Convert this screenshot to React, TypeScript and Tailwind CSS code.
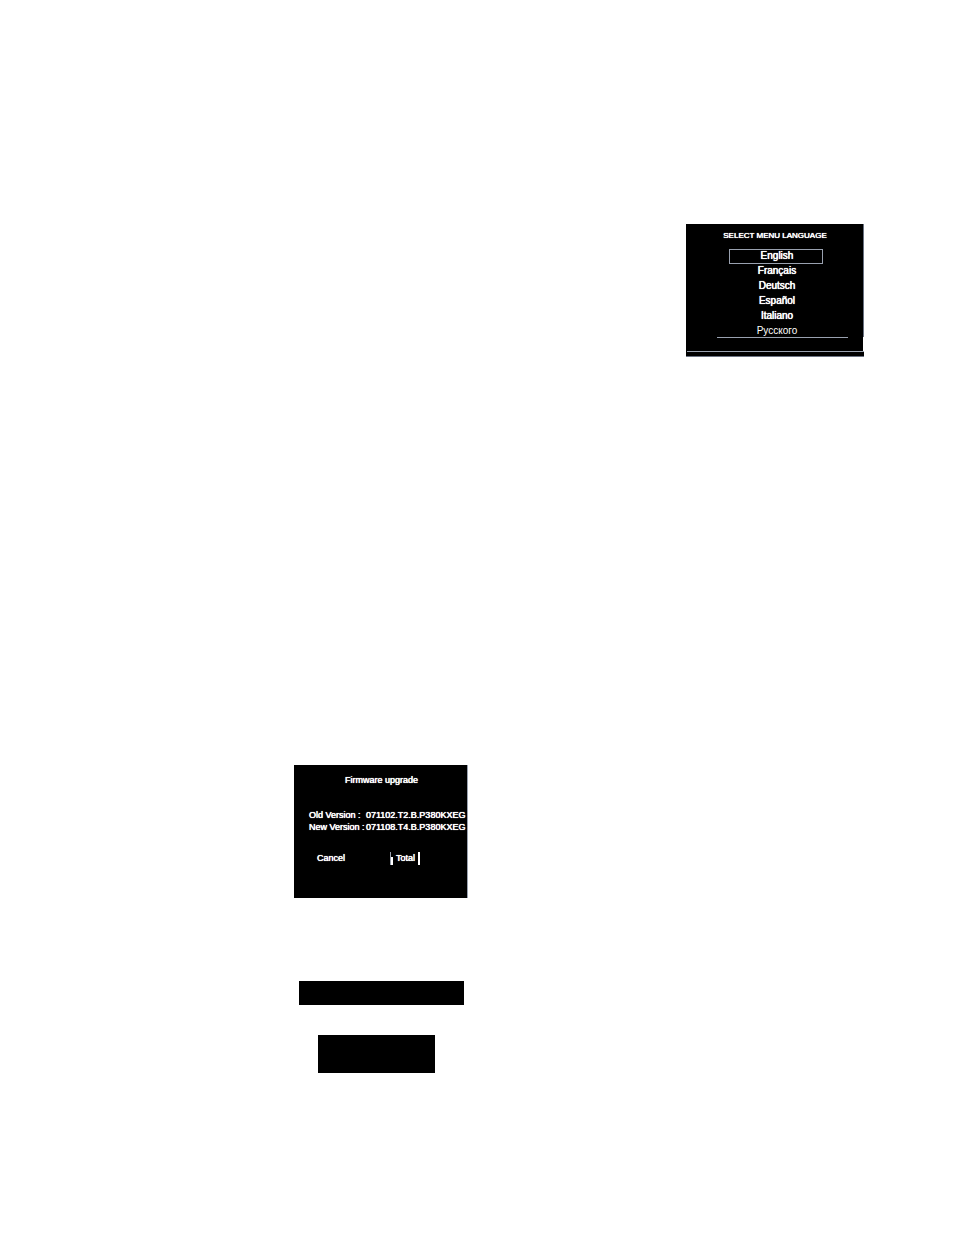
import { useState } from "react";

const LANGUAGES = ["English", "Français", "Deutsch", "Español", "Italiano", "Русского"];

const VERSIONS = [
  { label: "Old Version :", value: "071102.T2.B.P380KXEG" },
  { label: "New Version :", value: "071108.T4.B.P380KXEG" },
];

function LanguageMenu() {
  const [selected, setSelected] = useState("English");

  return (
    <section className="w-[178px] border-b border-gray-500 bg-black text-white">
      <div className="h-[113px] border-r border-gray-500 pt-2">
        <h2 className="pl-px text-center text-[8px] leading-2 whitespace-nowrap [text-shadow:0_0_0_white,0_0_1px_white]">
          SELECT MENU LANGUAGE
        </h2>
        <ul className="mt-[9px] ml-[43px] w-[94px]">
          {LANGUAGES.map((language) => (
            <li key={language}>
              <button
                type="button"
                onClick={() => setSelected(language)}
                className={`block h-[15px] w-full border pb-[2px] pl-[2px] text-center text-[10px] leading-[11px] ${
                  selected === language ? "border-gray-400" : "border-transparent"
                } ${language === "Русского" ? "" : "[text-shadow:0_0_0_white,0_0_1px_white]"}`}
              >
                {language}
              </button>
            </li>
          ))}
        </ul>
      </div>
      <div className="h-[14px] border-r border-white">
        <div className="mr-[15px] ml-[31px] border-t border-gray-400" />
      </div>
      <div className="ml-px h-[5px] border-t border-gray-400" />
    </section>
  );
}

function FirmwareDialog() {
  return (
    <section className="h-[133px] w-[174px] border-r border-gray-400 bg-black pt-[9px] text-white [text-shadow:0_0_0_white,0_0_1px_white]">
      <h2 className="pl-[2px] text-center text-[9px] leading-3">Firmware upgrade</h2>
      <dl className="mt-[23px] ml-[15px] text-[9px] leading-3">
        {VERSIONS.map((version) => (
          <div key={version.label} className="flex whitespace-nowrap">
            <dt className="w-[57px] shrink-0">{version.label}</dt>
            <dd>{version.value}</dd>
          </div>
        ))}
      </dl>
      <div className="mt-[19px] ml-[23px] flex items-start text-[9px] leading-3">
        <button
          type="button"
          className="w-[73px] text-left [text-shadow:0_0_0_white,0_0_1px_white]"
        >
          Cancel
        </button>
        <button
          type="button"
          className="flex h-[13px] w-[30px] justify-between [text-shadow:0_0_0_white,0_0_1px_white]"
        >
          <span className="flex h-full items-end">
            <span className="h-full w-px bg-gray-400" />
            <span className="h-2 w-[2px] bg-white" />
          </span>
          Total
          <span className="h-full w-[2px] bg-white" />
        </button>
      </div>
    </section>
  );
}

export default function App() {
  return (
    <main className="flex min-h-screen flex-col bg-white pt-56 font-['Liberation_Sans',Arial,sans-serif]">
      <div className="flex justify-end pr-[91px]">
        <LanguageMenu />
      </div>
      <div className="mt-[408px] pl-[294px]">
        <FirmwareDialog />
        <div className="mt-[83px] ml-[5px] h-6 w-[165px] bg-black" />
        <div className="mt-[30px] ml-6 h-[38px] w-[117px] bg-black" />
      </div>
    </main>
  );
}
